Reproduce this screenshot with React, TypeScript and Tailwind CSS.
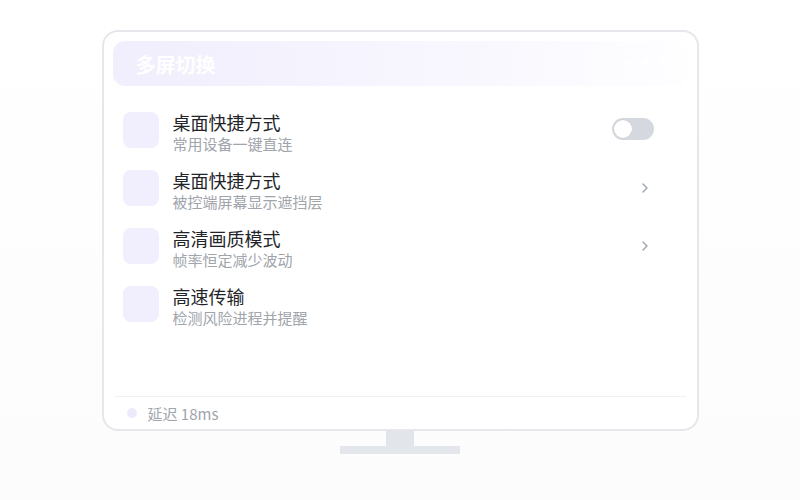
import React from 'react';

type Row = {
  title: string;
  desc: string;
  action: 'toggle' | 'chevron' | 'none';
};

const rows: Row[] = [
  { title: '桌面快捷方式', desc: '常用设备一键直连', action: 'toggle' },
  { title: '桌面快捷方式', desc: '被控端屏幕显示遮挡层', action: 'chevron' },
  { title: '高清画质模式', desc: '帧率恒定减少波动', action: 'chevron' },
  { title: '高速传输', desc: '检测风险进程并提醒', action: 'none' },
];

const font = { fontFamily: '"Noto Sans CJK SC", "Noto Sans", sans-serif' };

const Toggle = () => (
  <div className="mt-[17px] mr-[24px] ml-auto flex h-[22px] w-[42px] items-center rounded-full bg-[#d5d8de] px-[2px]">
    <div className="h-[18px] w-[18px] rounded-full bg-white shadow-[0_0_0_0.5px_rgba(0,0,0,0.06)]" />
  </div>
);

const Chevron = () => (
  <div className="mt-[24px] mr-[29px] ml-auto flex h-[10px] w-[8px] items-center justify-center">
    <svg width="6" height="10" viewBox="0 0 6 10" fill="none">
      <path d="M1 1l4 4-4 4" stroke="#9ca3af" strokeWidth="1.4" strokeLinecap="round" strokeLinejoin="round" />
    </svg>
  </div>
);

const SettingRow = ({ row }: { row: Row }) => (
  <div className="flex h-[58px] items-start">
    <div className="mt-[11px] h-[36px] w-[36px] shrink-0 rounded-lg bg-[#f1eefd]" />
    <div className="mt-[9px] ml-[14px] flex flex-col">
      <span className="text-[18px] leading-[24px] text-[#222428]">{row.title}</span>
      <span className="text-[15px] leading-[20px] text-[#a0a4ab]">{row.desc}</span>
    </div>
    {row.action === 'toggle' && <Toggle />}
    {row.action === 'chevron' && <Chevron />}
  </div>
);

export default function App() {
  return (
    <div
      className="flex h-[500px] w-full flex-col items-center bg-gradient-to-b from-white to-[#fcfcfd] pt-[30px]"
      style={font}
    >
      {/* screen */}
      <div className="flex h-[401px] w-[597px] flex-col rounded-2xl border-2 border-[#e5e7eb] bg-white px-[9px] pt-[9px]">
        <div className="flex h-[45px] shrink-0 items-center rounded-xl bg-gradient-to-r from-[#f1eefd] via-[#f7f5fe] to-[#fefeff] pl-[23px] pr-[20px]">
          <span className="pt-[3px] text-[20px] font-bold leading-none text-white">多屏切换</span>
          <div className="ml-auto mt-[-3px] flex items-center gap-[12px]">
            <span className="h-[7px] w-[7px] rounded-full bg-white/80" />
            <span className="h-[7px] w-[7px] rounded-full bg-white/80" />
            <span className="h-[7px] w-[7px] rounded-full bg-white/80" />
          </div>
        </div>

        <div className="mt-[15px] flex flex-col px-[10px]">
          {rows.map((r, i) => (
            <SettingRow key={i} row={r} />
          ))}
        </div>

        <div className="flex-1" />

        <div className="mx-[2px] flex h-[33px] items-center border-t border-[#eef0f3] pl-[12px]">
          <span className="h-[10px] w-[10px] rounded-full bg-[#eeeafd]" />
          <span className="ml-[11px] text-[15px] leading-none text-[#a0a4ab]">延迟 18ms</span>
        </div>
      </div>

      {/* stand */}
      <div className="h-[15px] w-[28px] bg-[#e2e5ea]" />
      <div className="h-[8px] w-[120px] bg-[#e3e6ea]" />
    </div>
  );
}
